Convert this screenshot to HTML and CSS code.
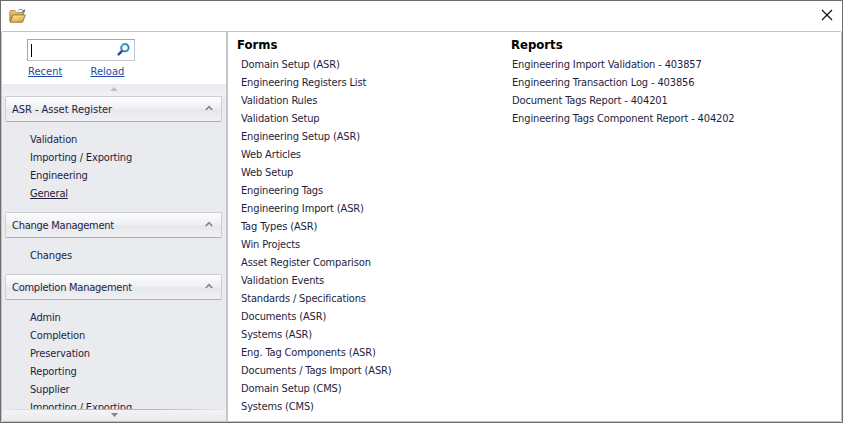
FILE: index.html
```
<!DOCTYPE html>
<html lang="en">
<head>
<meta charset="utf-8">
<title>Menu</title>
<link rel="stylesheet" href="styles.css">
</head>
<body>
<div class="window">
  <header class="titlebar">
    <svg class="folder" width="18" height="16" viewBox="0 0 18 16">
      <defs>
        <linearGradient id="fold" x1="0" y1="0" x2="0.6" y2="1"><stop offset="0" stop-color="#fff0a8"/><stop offset="1" stop-color="#e2a930"/></linearGradient>
        <linearGradient id="back" x1="0" y1="0" x2="0" y2="1"><stop offset="0" stop-color="#f0d07c"/><stop offset="1" stop-color="#a08348"/></linearGradient>
      </defs>
      <path d="M.8 13.5V3.5L1.5 2.5H6L7.5 4.5H14.5V8" fill="url(#back)" stroke="#b89548"/>
      <path d="M1.2 14.2L4 6.9H16.3L13.6 14.2Z" fill="url(#fold)" stroke="#7d6534" stroke-width=".8"/>
      <path d="M9.3 2.4Q11.6 0 14 2.4" fill="none" stroke="#5f83a6" stroke-width="1"/>
      <path d="M15.8 1V4.6H12.2Z" fill="#4d7397"/>
    </svg>
    <svg class="close" width="12" height="12" viewBox="0 0 12 12"><path d="M1 1L11 11M11 1L1 11" stroke="#111" stroke-width="1.2" fill="none"/></svg>
  </header>
  <div class="body">
    <aside class="side">
      <div class="search-area">
        <div class="search">
          <span class="caret"></span>
          <svg width="13" height="13" viewBox="0 0 13 13">
            <path d="M1.6 11.3L5 8" stroke="#2a4f94" stroke-width="2.5" stroke-linecap="round"/>
            <circle cx="7.9" cy="4.7" r="3.7" fill="#f7fbff" stroke="#2f82bd" stroke-width="1.9"/>
            <path d="M4.4 4Q5.6 1.1 8.3 1.1" fill="none" stroke="#54b3dc" stroke-width="1.6"/>
          </svg>
        </div>
        <div class="links"><a>Recent</a><a>Reload</a></div>
      </div>
      <div class="scroll up"><svg width="8" height="4" viewBox="0 0 8 4"><path d="M0 4L4 0L8 4Z" fill="#bfc1c8"/></svg></div>
      <nav class="nav">
        <div class="group wide"><span>ASR - Asset Register</span><svg width="8" height="6" viewBox="0 0 8 6"><path d="M.8 5L4 1.6L7.2 5"/></svg></div>
        <ul class="items"><li>Validation</li><li>Importing / Exporting</li><li>Engineering</li><li><u>General</u></li></ul>
        <div class="group"><span>Change Management</span><svg width="8" height="6" viewBox="0 0 8 6"><path d="M.8 5L4 1.6L7.2 5"/></svg></div>
        <ul class="items"><li>Changes</li></ul>
        <div class="group"><span>Completion Management</span><svg width="8" height="6" viewBox="0 0 8 6"><path d="M.8 5L4 1.6L7.2 5"/></svg></div>
        <ul class="items"><li>Admin</li><li>Completion</li><li>Preservation</li><li>Reporting</li><li>Supplier</li><li>Importing / Exporting</li></ul>
      </nav>
      <div class="scroll down"><svg width="7" height="4" viewBox="0 0 7 4"><path d="M0 0H7L3.5 4Z" fill="#80828e"/></svg></div>
    </aside>
    <main class="content">
      <section class="forms">
        <h2>Forms</h2>
        <ul class="list">
          <li>Domain Setup (ASR)</li><li>Engineering Registers List</li><li>Validation Rules</li><li>Validation Setup</li><li>Engineering Setup (ASR)</li><li>Web Articles</li><li>Web Setup</li><li>Engineering Tags</li><li>Engineering Import (ASR)</li><li>Tag Types (ASR)</li><li>Win Projects</li><li>Asset Register Comparison</li><li>Validation Events</li><li>Standards / Specifications</li><li>Documents (ASR)</li><li>Systems (ASR)</li><li>Eng. Tag Components (ASR)</li><li>Documents / Tags Import (ASR)</li><li>Domain Setup (CMS)</li><li>Systems (CMS)</li>
        </ul>
      </section>
      <section class="reports">
        <h2>Reports</h2>
        <ul class="list">
          <li>Engineering Import Validation - 403857</li><li>Engineering Transaction Log - 403856</li><li>Document Tags Report - 404201</li><li>Engineering Tags Component Report - 404202</li>
        </ul>
      </section>
    </main>
  </div>
</div>
</body>
</html>
```
FILE: styles.css
```
* { box-sizing: border-box; }
body { margin: 0; background: #fff; color: #1e1e3c; font: 11px/18px "DejaVu Sans Condensed", "DejaVu Sans", sans-serif; font-stretch: condensed; letter-spacing: -0.14px; white-space: nowrap; }
ul { list-style: none; margin: 0; padding: 0; }
svg { display: block; }
.window { width: 843px; height: 423px; border: 1px solid #6d6d6f; display: flex; flex-direction: column; overflow: hidden; }
.titlebar { height: 30px; flex: none; display: flex; justify-content: space-between; padding: 7px 9px 0 8px; }
.close { margin-top: 1px; }
.body { flex: 1; min-height: 0; display: flex; border: 1px solid #c0c3cb; border-radius: 2px; }
.side { width: 224px; flex: none; display: flex; flex-direction: column; background: #eaebef; }
.search-area { height: 52px; flex: none; background: #fff; padding: 7px 0 0 25px; }
.search { width: 108px; height: 22px; border: 1px solid #c4c6d0; border-top-color: #a4a6b0; border-left-color: #a4a6b0; display: flex; justify-content: space-between; padding: 3px 4px 0 3px; }
.caret { width: 1px; height: 13px; background: #000; margin-top: 1px; }
.links { display: flex; gap: 28px; padding-left: 1px; margin-top: 2px; color: #1f4aa8; letter-spacing: 0.05px; }
.links a { text-decoration: underline; text-underline-offset: 1px; }
.scroll { height: 12px; flex: none; display: flex; justify-content: center; }
.up { padding-top: 3px; background: linear-gradient(#eaebef, #f0f1f4); }
.down { padding-top: 3px; border-top: 1px solid; border-image: linear-gradient(90deg, #eaebef, #b6b8bf 30%, #b6b8bf 70%, #eaebef) 1; background: linear-gradient(#f3f3f6, #eaebef); }
.nav { flex: 1; min-height: 0; overflow: hidden; padding: 0 4px 0 3px; }
.group { height: 26px; border: 1px solid #cdcfd5; border-bottom-color: #acaeb5; border-radius: 2px; background: linear-gradient(#fdfdfd, #eeeff2 50%, #e6e7eb 53%, #f1f1f4); display: flex; align-items: center; justify-content: space-between; padding: 2px 8px 0 6px; letter-spacing: -0.25px; }
.group.wide { letter-spacing: -0.03px; }
.group svg { fill: none; stroke: #80828e; stroke-width: 1.6; margin-top: -4px; }
.items { padding: 9px 0 9px 25px; letter-spacing: -0.16px; }
.items u { text-underline-offset: 1px; }
.content { flex: 1; display: flex; background: #fff; border-left: 2px solid #c3c6cf; padding-top: 4px; }
.forms { width: 273px; flex: none; padding-left: 9px; }
.reports { padding-left: 10px; }
h2 { margin: 0; font: bold 13px/18px "DejaVu Sans Condensed", "DejaVu Sans", sans-serif; font-stretch: condensed; letter-spacing: 0; color: #000; }
.list { padding: 2px 0 0 4px; }
.reports .list { padding-left: 1px; }
```
